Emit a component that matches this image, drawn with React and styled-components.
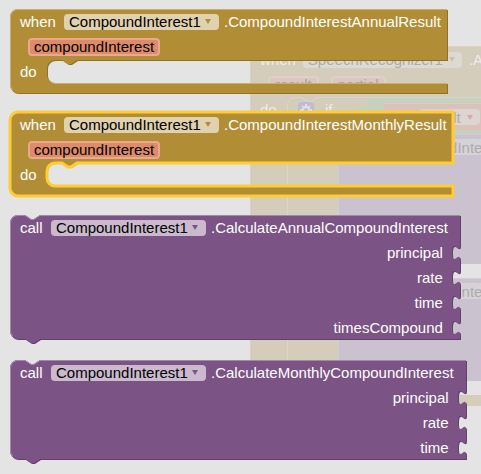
import React, { useLayoutEffect, useRef, useState } from "react";
import styled, { createGlobalStyle } from "styled-components";

const palette = {
  event: { fill: "#b18e35", dark: "#8e722a", light: "#c8b072", field: "#e0d2ae", arrow: "#b18e35" },
  call: { fill: "#7c5385", dark: "#63426a", light: "#a387aa", field: "#cbbace", arrow: "#7c5385" },
};

const GlobalStyle = createGlobalStyle`
  * { box-sizing: border-box; }
  html, body { margin: 0; }
  html { overflow: hidden; background: #e4e4e4; }
  body, select {
    font-family: "Liberation Sans", Arial, sans-serif;
    font-size: 15px;
    line-height: 17px;
  }
`;

const Page = styled.main`
  position: relative;
  min-height: 100vh;
  overflow: hidden;
  background: #e4e4e4;
`;

/* ---------- Flyout blocks ---------- */

const Flyout = styled.section`
  position: relative;
  display: flex;
  flex-direction: column;
  align-items: flex-start;
  gap: 18px;
  padding: 9px 10px 14px;
`;

const BlockBox = styled.article`
  position: relative;
  width: max-content;
  color: #fff;
  white-space: nowrap;
  margin-bottom: ${(p) => (p.$kind === "call" ? "2px" : "0")};
`;

const Outline = styled.svg`
  position: absolute;
  inset: 0;
  width: 100%;
  height: 100%;
  overflow: visible;
`;

const Content = styled.div`
  position: relative;
  display: flex;
  flex-direction: column;
`;

const TitleRow = styled.header`
  display: flex;
  align-items: center;
  height: 25px;
  padding-left: 10px;
  padding-right: ${(p) => (p.$kind === "call" ? "13px" : "7px")};
`;

const Keyword = styled.span`
  min-width: ${(p) => (p.$kind === "call" ? "31px" : "44px")};
`;

const ParamRow = styled.div`
  display: flex;
  align-items: center;
  height: 26px;
  padding-left: 18px;
`;

const Param = styled.span`
  height: 18px;
  padding: 0 4px;
  border: 2px solid #eba88e;
  border-radius: 4px;
  background: #de8b6b;
  color: #000;
  line-height: 14px;
`;

const StatementRow = styled.div`
  display: flex;
  align-items: center;
  height: 23px;
  padding-left: 10px;
  margin-bottom: 11px;
`;

const InputRow = styled.div`
  display: flex;
  align-items: center;
  justify-content: flex-end;
  height: 25px;
  padding-right: 18px;
`;

const Field = styled.label`
  position: relative;
  display: inline-flex;
  align-items: center;
  height: 16px;
  margin-right: 5px;
  border-radius: 4px;
  background: ${(p) => palette[p.$kind].field};
  color: ${(p) => palette[p.$kind].arrow};
`;

const FieldSelect = styled.select`
  appearance: none;
  height: 16px;
  margin: 0;
  padding: 0 18px 0 5px;
  border: 0;
  background: transparent;
  color: #000;
  line-height: 16px;
`;

const Arrow = styled.svg`
  position: absolute;
  right: 8px;
  width: 6px;
  height: 5px;
  fill: currentColor;
  pointer-events: none;
`;

const NOTCH = "l6,4 h3 l6,-4";
const NOTCH_BACK = "l-6,4 h-3 l-6,-4";

function eventPath(w, h) {
  return `M0,8 a8,8 0 0 1 8,-8 H${w} V51 H67 ${NOTCH_BACK} H45 a8,8 0 0 0 -8,8 v7 a8,8 0 0 0 8,8 H${w} V${h} H8 a8,8 0 0 1 -8,-8 z`;
}

function callPath(w, h, inputs) {
  const sockets = Array.from(
    { length: inputs },
    (_, i) => `V${25 * (i + 1) + 5} c0,10 -8,-8 -8,7.5 s8,-2.5 8,7.5`
  ).join(" ");
  return `M0,8 a8,8 0 0 1 8,-8 H15 ${NOTCH} H${w} ${sockets} V${h} H30 ${NOTCH_BACK} H8 a8,8 0 0 1 -8,-8 z`;
}

function edgeLight(kind, w, h) {
  const bottomLeft = `M2.5,${h - 3} A8,8 0 0 1 0.5,${h - 8}`;
  return kind === "event"
    ? `${bottomLeft} V8 a7.5,7.5 0 0 1 7.5,-7.5 H${w} M40,72 a8,8 0 0 0 5,2.5 H${w}`
    : `${bottomLeft} V8 a7.5,7.5 0 0 1 7.5,-7.5 H15 ${NOTCH} H${w}`;
}

function Block({ kind, selected, inputs = 0, children }) {
  const ref = useRef(null);
  const [size, setSize] = useState({ w: 0, h: 0 });

  useLayoutEffect(() => {
    const measure = () =>
      setSize({ w: ref.current.offsetWidth, h: ref.current.offsetHeight });
    measure();
    const observer = new ResizeObserver(measure);
    observer.observe(ref.current);
    return () => observer.disconnect();
  }, []);

  const w = size.w - 1;
  const h = size.h - 1;
  const c = palette[kind];
  const d = kind === "event" ? eventPath(w, h) : callPath(w, h, inputs);

  return (
    <BlockBox ref={ref} $kind={kind}>
      {size.w > 0 && (
        <Outline aria-hidden="true">
          <path d={d} fill={c.dark} transform="translate(1 1)" />
          <path d={d} fill={c.fill} />
          {selected ? (
            <path d={d} fill="none" stroke="#ffcc33" strokeWidth="3" />
          ) : (
            <path d={edgeLight(kind, w, h)} fill="none" stroke={c.light} />
          )}
        </Outline>
      )}
      <Content>{children}</Content>
    </BlockBox>
  );
}

function ComponentField({ kind }) {
  return (
    <Field $kind={kind}>
      <FieldSelect aria-label="Component" defaultValue="CompoundInterest1">
        <option>CompoundInterest1</option>
      </FieldSelect>
      <Arrow viewBox="0 0 6 5" aria-hidden="true">
        <path d="M0,0 H6 L3,5 z" />
      </Arrow>
    </Field>
  );
}

function Title({ kind, keyword, name }) {
  return (
    <TitleRow $kind={kind}>
      <Keyword $kind={kind}>{keyword}</Keyword>
      <ComponentField kind={kind} />
      <span>{name}</span>
    </TitleRow>
  );
}

function EventBlock({ name, selected }) {
  return (
    <Block kind="event" selected={selected}>
      <Title kind="event" keyword="when" name={name} />
      <ParamRow>
        <Param>compoundInterest</Param>
      </ParamRow>
      <StatementRow>do</StatementRow>
    </Block>
  );
}

function CallBlock({ name, args }) {
  return (
    <Block kind="call" inputs={args.length}>
      <Title kind="call" keyword="call" name={name} />
      {args.map((arg) => (
        <InputRow key={arg}>{arg}</InputRow>
      ))}
    </Block>
  );
}

/* ---------- Dimmed workspace behind the flyout ---------- */

const Workspace = styled.div`
  position: absolute;
  inset: 0;
  overflow: hidden;
  padding: 46px 0 0 250px;
  white-space: nowrap;
  color: #eeece8;
`;

const DimEvent = styled.div`
  display: flex;
  flex-direction: column;
  padding-bottom: 11px;
  border-top: 1px solid #d9d3c5;
  border-left: 1px solid #d9d3c5;
  border-top-left-radius: 8px;
  background: #d4cdbc;
`;

const DimRow = styled.div`
  display: flex;
  align-items: center;
  height: 25px;
  padding-left: ${(p) => p.$indent};
  gap: ${(p) => p.$gap};
`;

const DimChip = styled.span`
  display: flex;
  flex: none;
  align-items: center;
  gap: 6px;
  height: 16px;
  padding: 0 7px 0 5px;
  border-radius: 4px;
  background: ${(p) => p.$fill};
  color: #aeabab;
`;

const DimParam = styled.span`
  height: 18px;
  padding: 0 5px;
  border: 2px solid #e1d0c9;
  border-radius: 4px;
  background: #dcc7c0;
  color: #aaa29e;
  line-height: 14px;
`;

const DimArrow = styled.svg`
  width: 6px;
  height: 5px;
  fill: ${(p) => p.$fill};
`;

const DimBody = styled.div`
  display: grid;
  grid-template-columns: 36px 1fr;
`;

const DimDo = styled.span`
  padding: 4px 0 0 9px;
`;

const DimIf = styled.div`
  position: relative;
  display: flex;
  flex-direction: column;
  min-width: 0;
`;

const IfEdge = styled.svg`
  position: absolute;
  inset: 0;
  width: 80px;
  height: 100%;
`;

const IfRow = styled.div`
  display: grid;
  grid-template-columns: 38px 34px 8px 1fr;
  height: 37px;
`;

const Gear = styled.svg`
  width: 16px;
  height: 16px;
  margin: 5px 0 0 11px;
`;

const IfLabel = styled.span`
  padding-top: 4px;
`;

const Plug = styled.svg`
  width: 8px;
  height: 15px;
  margin-top: 6px;
`;

const DimCompare = styled.div`
  padding: 5px 0 4px 17px;
  border-top: 1px solid #d2dac9;
  background: #c8d1bd;
  min-width: 0;
`;

const DimGetter = styled.div`
  display: flex;
  align-items: center;
  height: 27px;
  padding-left: 35px;
  border-top: 1px solid #e1cdc6;
  background: #dac1b9;
`;

const ThenBody = styled.div`
  display: flex;
  flex-direction: column;
  gap: 14px;
  margin-left: 51px;
  padding-bottom: 14px;
  background: #e4e4e4;
`;

const DimCall = styled.div`
  display: flex;
  align-items: flex-start;
  height: ${(p) => p.$h};
  padding: 4px 0 0 40px;
  border-top: 1px solid #d3cdd6;
  border-left: 1px solid #d3cdd6;
  background: #cac2ce;
  overflow: hidden;
`;

function WorkspaceArrow({ fill }) {
  return (
    <DimArrow $fill={fill} viewBox="0 0 6 5">
      <path d="M0,0 H6 L3,5 z" />
    </DimArrow>
  );
}

function DimmedWorkspace() {
  return (
    <Workspace aria-hidden="true">
      <DimEvent>
        <DimRow $indent="9px" $gap="7px">
          <span>when</span>
          <DimChip $fill="#dddad3">
            SpeechRecognizer1
            <WorkspaceArrow fill="#cbc2ab" />
          </DimChip>
          <span>.A</span>
        </DimRow>
        <DimRow $indent="17px" $gap="12px">
          <DimParam>result</DimParam>
          <DimParam>partial</DimParam>
        </DimRow>
        <DimBody>
          <DimDo>do</DimDo>
          <DimIf>
            <IfEdge>
              <path
                d="M.5,400 V9 a8,8 0 0 1 8,-8.5 H15 l6,4 h3 l6,-4 H80"
                fill="none"
                stroke="#ddd7ca"
              />
            </IfEdge>
            <IfRow>
              <Gear viewBox="0 0 16 16">
                <rect width="16" height="16" rx="4" fill="#bfbbd0" />
                <circle cx="8" cy="8" r="3" fill="none" stroke="#e2e0e6" strokeWidth="2" />
                <path
                  d="M8,2 V4 M8,12 V14 M2,8 H4 M12,8 H14 M4,4 L5,5 M11,11 L12,12 M4,12 L5,11 M11,5 L12,4"
                  stroke="#e2e0e6"
                  strokeWidth="2"
                />
              </Gear>
              <IfLabel>if</IfLabel>
              <Plug viewBox="0 0 8 15">
                <path d="M8,0 c0,10 -8,-8 -8,7.5 s8,-2.5 8,7.5 z" fill="#c8d1bd" />
              </Plug>
              <DimCompare>
                <DimGetter>
                  <DimChip $fill="#ddd5d2">
                    result
                    <WorkspaceArrow fill="#d6aba1" />
                  </DimChip>
                </DimGetter>
              </DimCompare>
            </IfRow>
            <ThenBody>
              <DimCall $h="130px">
                <DimChip $fill="#d6d2d8">CompoundInterest1</DimChip>
              </DimCall>
              <DimCall $h="103px">
                <DimChip $fill="#d6d2d8">CompoundInterest1</DimChip>
              </DimCall>
            </ThenBody>
          </DimIf>
        </DimBody>
      </DimEvent>
    </Workspace>
  );
}

export default function App() {
  return (
    <>
      <GlobalStyle />
      <Page>
        <DimmedWorkspace />
        <Flyout>
          <EventBlock name=".CompoundInterestAnnualResult" />
          <EventBlock name=".CompoundInterestMonthlyResult" selected />
          <CallBlock
            name=".CalculateAnnualCompoundInterest"
            args={["principal", "rate", "time", "timesCompound"]}
          />
          <CallBlock
            name=".CalculateMonthlyCompoundInterest"
            args={["principal", "rate", "time"]}
          />
        </Flyout>
      </Page>
    </>
  );
}
